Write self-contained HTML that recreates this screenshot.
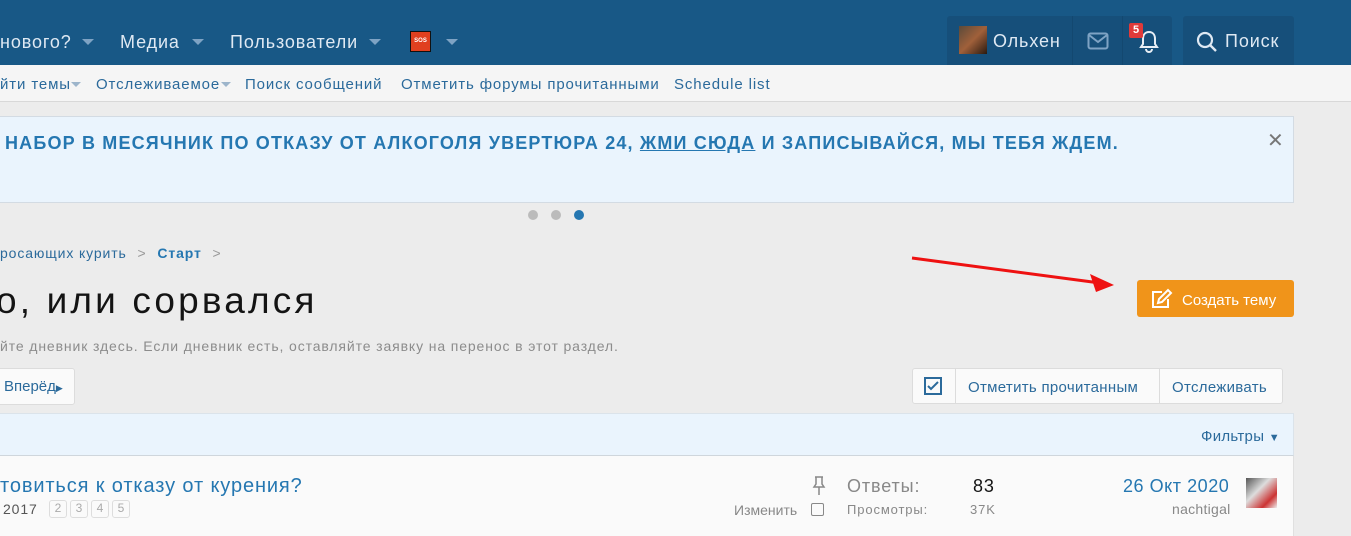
<!DOCTYPE html>
<html><head><meta charset="utf-8"><style>
*{box-sizing:border-box;margin:0;padding:0}
body{width:1351px;height:528px;overflow:hidden;background:#ececec;font-family:"Liberation Sans","DejaVu Sans",sans-serif;position:relative;color:#141414;letter-spacing:.055em}
.a{position:absolute;white-space:nowrap}
.hdr{left:0;top:0;width:1351px;height:65px;background:#185886}
.nav{font-size:18px;color:#dfe9f3;top:32px}
.car{width:0;height:0;border-left:6px solid transparent;border-right:6px solid transparent;border-top:6px solid #7ea3c4;top:39px}
.sub{left:0;top:65px;width:1351px;height:37px;background:#f5f5f5;border-bottom:1px solid #d8d8d8}
.st{top:76px;font-size:15px;color:#2b6a9b}
.scar{width:0;height:0;border-left:5px solid transparent;border-right:5px solid transparent;border-top:5px solid #9db5cb;top:82px}
.ub{background:#164f7a;top:16px;height:49px;border-radius:3px 3px 0 0}
.blue{color:#2577b1}
</style></head><body>
<div class="a hdr"></div>
<div class="a nav" style="left:0">нового?</div><div class="a car" style="left:82px"></div>
<div class="a nav" style="left:120px">Медиа</div><div class="a car" style="left:192px"></div>
<div class="a nav" style="left:230px">Пользователи</div><div class="a car" style="left:369px"></div>
<div class="a" style="left:410px;top:31px;width:21px;height:21px;background:#e0401f;border:1px solid #111;color:#fff;font-size:6px;font-weight:bold;text-align:center;line-height:19px;letter-spacing:0">SOS</div>
<div class="a car" style="left:446px"></div>

<div class="a ub" style="left:947px;width:225px"></div>
<div class="a" style="left:1072px;top:16px;width:1px;height:49px;background:#134870"></div>
<div class="a" style="left:1122px;top:16px;width:1px;height:49px;background:#134870"></div>
<div class="a" style="left:959px;top:26px;width:28px;height:28px;background:linear-gradient(135deg,#5a4a3a,#a0603a 50%,#2a1a10)"></div>
<div class="a nav" style="left:993px;top:31px">Ольхен</div>
<svg class="a" style="left:1087px;top:32px" width="22" height="18" viewBox="0 0 22 18"><rect x="1.5" y="1.5" width="19" height="15" rx="2" fill="none" stroke="#7ea3c4" stroke-width="2"/><path d="M2 3l9 7 9-7" fill="none" stroke="#7ea3c4" stroke-width="2"/></svg>
<svg class="a" style="left:1138px;top:29px" width="22" height="24" viewBox="0 0 22 24"><path d="M11 3c-4 0-6 3-6 7v5l-2 3h16l-2-3v-5c0-4-2-7-6-7z" fill="none" stroke="#e8eef5" stroke-width="2"/><path d="M8 20a3 3 0 0 0 6 0" fill="none" stroke="#e8eef5" stroke-width="2"/></svg>
<div class="a" style="left:1129px;top:23px;width:14px;height:15px;background:#e03a3a;border-radius:2px;color:#fff;font-size:11px;font-weight:bold;text-align:center;line-height:15px;letter-spacing:0">5</div>
<div class="a ub" style="left:1183px;width:111px"></div>
<svg class="a" style="left:1196px;top:31px" width="22" height="22" viewBox="0 0 22 22"><circle cx="9" cy="9" r="7" fill="none" stroke="#dfe9f3" stroke-width="2.2"/><path d="M14 14l6 6" stroke="#dfe9f3" stroke-width="2.4"/></svg>
<div class="a nav" style="left:1225px;top:31px">Поиск</div>

<div class="a sub"></div>
<div class="a st" style="left:0">йти темы</div><div class="a scar" style="left:71px"></div>
<div class="a st" style="left:96px">Отслеживаемое</div><div class="a scar" style="left:221px"></div>
<div class="a st" style="left:245px">Поиск сообщений</div>
<div class="a st" style="left:401px">Отметить форумы прочитанными</div>
<div class="a st" style="left:674px">Schedule list</div>

<div class="a" style="left:-2px;top:116px;width:1296px;height:87px;background:#eaf4fd;border:1px solid #d3dbe3"></div>
<div class="a blue" style="left:5px;top:133px;font-size:18px;font-weight:bold;color:#2577b1;letter-spacing:.065em">НАБОР В МЕСЯЧНИК ПО ОТКАЗУ ОТ АЛКОГОЛЯ УВЕРТЮРА 24, <u>ЖМИ СЮДА</u> И ЗАПИСЫВАЙСЯ, МЫ ТЕБЯ ЖДЕМ.</div>
<div class="a" style="left:1267px;top:128px;font-size:20px;color:#777">✕</div>
<div class="a" style="left:528px;top:210px;width:10px;height:10px;border-radius:5px;background:#bbb"></div>
<div class="a" style="left:551px;top:210px;width:10px;height:10px;border-radius:5px;background:#bbb"></div>
<div class="a" style="left:574px;top:210px;width:10px;height:10px;border-radius:5px;background:#2577b1"></div>

<div class="a" style="left:0;top:245px;font-size:14px;color:#2b6a9b">росающих курить <span style="color:#999;padding:0 6px">&gt;</span> <b style="color:#2577b1">Старт</b> <span style="color:#999;padding:0 6px">&gt;</span></div>
<div class="a" style="left:-4px;top:280px;font-size:37px;color:#141414;letter-spacing:.085em">о, или сорвался</div>
<div class="a" style="left:0;top:338px;font-size:14px;color:#8c8c8c">йте дневник здесь. Если дневник есть, оставляйте заявку на перенос в этот раздел.</div>
<div class="a" style="left:-5px;top:368px;width:80px;height:37px;background:#fafafa;border:1px solid #dcdcdc;border-radius:3px"></div>
<div class="a" style="left:4px;top:378px;font-size:15px;color:#2b6a9b;letter-spacing:0">Вперёд<span style="font-size:9px">▶</span></div>

<svg class="a" style="left:900px;top:250px" width="230" height="45"><path d="M12 8L200 33" stroke="#ee1111" stroke-width="3"/><path d="M214 35L190 24L196 42z" fill="#ee1111"/></svg>
<div class="a" style="left:1137px;top:280px;width:157px;height:37px;background:#f0941a;border-radius:3px"></div>
<svg class="a" style="left:1150px;top:288px" width="23" height="22" viewBox="0 0 23 22"><path d="M12 4H3v15h15v-8" fill="none" stroke="#fff" stroke-width="2"/><path d="M8 15l1-4 9-9 3 3-9 9z" fill="none" stroke="#fff" stroke-width="2"/></svg>
<div class="a" style="left:1182px;top:292px;font-size:15px;color:#fff;letter-spacing:0">Создать тему</div>

<div class="a" style="left:912px;top:368px;width:371px;height:36px;background:#fafafa;border:1px solid #dcdcdc;border-radius:3px"></div>
<div class="a" style="left:955px;top:369px;width:1px;height:34px;background:#dcdcdc"></div>
<div class="a" style="left:1159px;top:369px;width:1px;height:34px;background:#dcdcdc"></div>
<svg class="a" style="left:924px;top:377px" width="18" height="18"><rect x="1" y="1" width="16" height="16" fill="none" stroke="#2b6a9b" stroke-width="2"/><path d="M4 9l3 3 7-7" fill="none" stroke="#2b6a9b" stroke-width="2"/></svg>
<div class="a" style="left:968px;top:379px;font-size:15px;color:#2b6a9b;letter-spacing:.02em">Отметить прочитанным</div>
<div class="a" style="left:1172px;top:379px;font-size:15px;color:#2b6a9b;letter-spacing:.02em">Отслеживать</div>

<div class="a" style="left:-2px;top:413px;width:1296px;height:43px;background:#eaf4fd;border:1px solid #dbe3ea;border-bottom:1px solid #cfd6dc"></div>
<div class="a" style="left:1201px;top:428px;font-size:15px;color:#2b6a9b;letter-spacing:.02em">Фильтры <span style="font-size:11px">▼</span></div>
<div class="a" style="left:-2px;top:456px;width:1296px;height:80px;background:#fafafa;border-left:1px solid #e0e0e0;border-right:1px solid #e0e0e0"></div>
<div class="a" style="left:0;top:475px;font-size:20px;color:#2577b1">товиться к отказу от курения?</div>
<div class="a" style="left:3px;top:501px;font-size:14px;color:#555">2017</div>
<div class="a" style="left:49px;top:500px;font-size:12px;color:#aaa;letter-spacing:0">
<span style="display:inline-block;width:18px;height:18px;border:1px solid #ddd;border-radius:3px;text-align:center;margin-right:3px">2</span><span style="display:inline-block;width:18px;height:18px;border:1px solid #ddd;border-radius:3px;text-align:center;margin-right:3px">3</span><span style="display:inline-block;width:18px;height:18px;border:1px solid #ddd;border-radius:3px;text-align:center;margin-right:3px">4</span><span style="display:inline-block;width:18px;height:18px;border:1px solid #ddd;border-radius:3px;text-align:center">5</span></div>
<svg class="a" style="left:812px;top:476px" width="14" height="20"><path d="M3 1h8M4 1v7l-2 3h10l-2-3V1M7 11v8" fill="none" stroke="#888" stroke-width="1.5"/></svg>
<div class="a" style="left:734px;top:502px;font-size:14px;color:#888;letter-spacing:0">Изменить</div>
<div class="a" style="left:811px;top:503px;width:13px;height:13px;border:1.5px solid #888;border-radius:2px"></div>
<div class="a" style="left:847px;top:476px;font-size:18px;color:#888">Ответы:</div>
<div class="a" style="left:973px;top:476px;font-size:18px;color:#141414">83</div>
<div class="a" style="left:847px;top:502px;font-size:13px;color:#888">Просмотры:</div>
<div class="a" style="left:970px;top:502px;font-size:13px;color:#888">37K</div>
<div class="a" style="left:1123px;top:476px;font-size:18px;color:#2577b1;letter-spacing:.03em">26 Окт 2020</div>
<div class="a" style="left:1172px;top:501px;font-size:14px;color:#888;letter-spacing:.02em">nachtigal</div>
<div class="a" style="left:1246px;top:478px;width:31px;height:30px;background:linear-gradient(135deg,#555,#ddd 40%,#c33 75%,#eee)"></div>
</body></html>
